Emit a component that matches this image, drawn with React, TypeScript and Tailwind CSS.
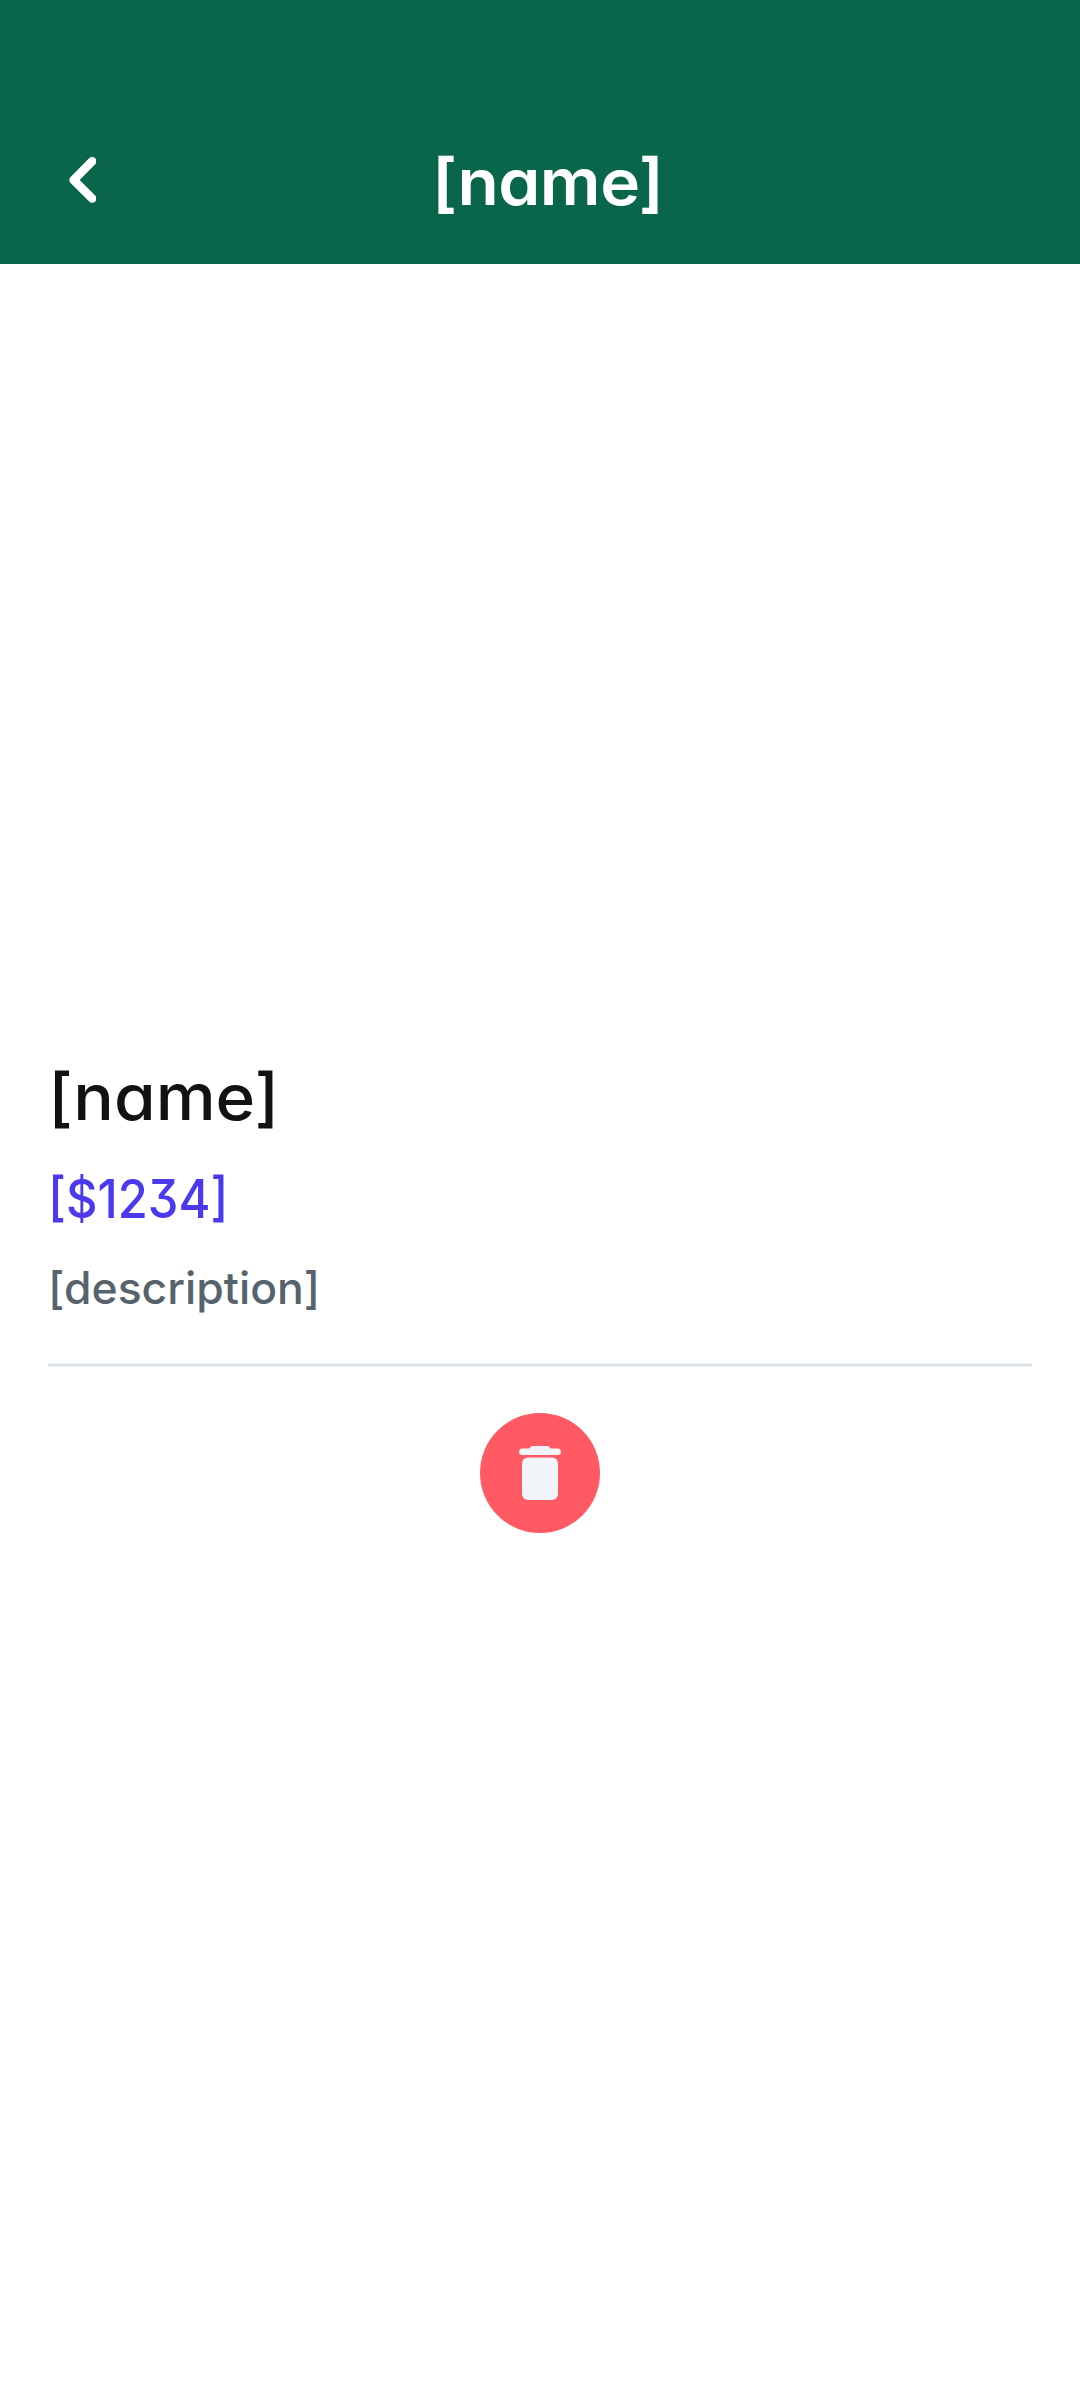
function BackIcon() {
  return (
    <svg width="27" height="46" viewBox="0 0 27 46" fill="none" className="block">
      <path d="M23.2 4.3 L4.6 23 L23.2 41.5" stroke="#ffffff" strokeWidth="8.6" strokeLinecap="round" strokeLinejoin="round" />
    </svg>
  );
}

function TrashIcon() {
  return (
    <svg width="42" height="54" viewBox="0 0 42 54" fill="#f1f4f8" className="block">
      <path d="M3.5 2.5 H9.5 C11.5 2.5 11.2 0 14 0 H28 C30.8 0 30.5 2.5 32.5 2.5 H38.5 Q42 2.5 42 6 Q42 9 38.5 9 H3.5 Q0 9 0 6 Q0 2.5 3.5 2.5 Z" />
      <rect x="3" y="11.5" width="36" height="42.5" rx="6" />
    </svg>
  );
}

export default function App() {
  return (
    <div className="flex h-[2400px] w-[1080px] flex-col bg-white font-['Inter',sans-serif] font-medium [font-feature-settings:'cv11','cv09']">
      <header className="grid h-[264px] grid-cols-[432px_1fr] bg-[#09664a]">
        <button aria-label="Back" className="ml-[69px] mt-[157px] h-[46px] w-[27px]">
          <BackIcon />
        </button>
        <h1 className="mt-[142px] h-20 origin-left scale-x-[1.055] whitespace-nowrap text-[64px] font-semibold leading-[80px] tracking-[-0.5px] text-white">[name]</h1>
      </header>
      <main className="flex flex-col px-12 pt-[793px]">
        <h2 className="h-20 origin-left scale-x-[1.055] whitespace-nowrap text-[64px] leading-[80px] text-[#101213]">[name]</h2>
        <p className="mt-[30px] h-16 origin-left scale-x-[0.92] whitespace-nowrap text-[53px] leading-[64px] text-[#4b39ef]">[$1234]</p>
        <p className="mt-[29px] h-14 origin-left whitespace-nowrap text-[44.5px] leading-[56px] text-[#57636c]">[description]</p>
        <div className="mt-[47px] h-1 border-y border-[#edf1f3] bg-[#dbe2e7]" />
        <button aria-label="Delete" className="mx-auto mt-[46px] flex size-[120px] justify-center rounded-full bg-[#ff5963] pt-[33px]">
          <TrashIcon />
        </button>
      </main>
    </div>
  );
}
